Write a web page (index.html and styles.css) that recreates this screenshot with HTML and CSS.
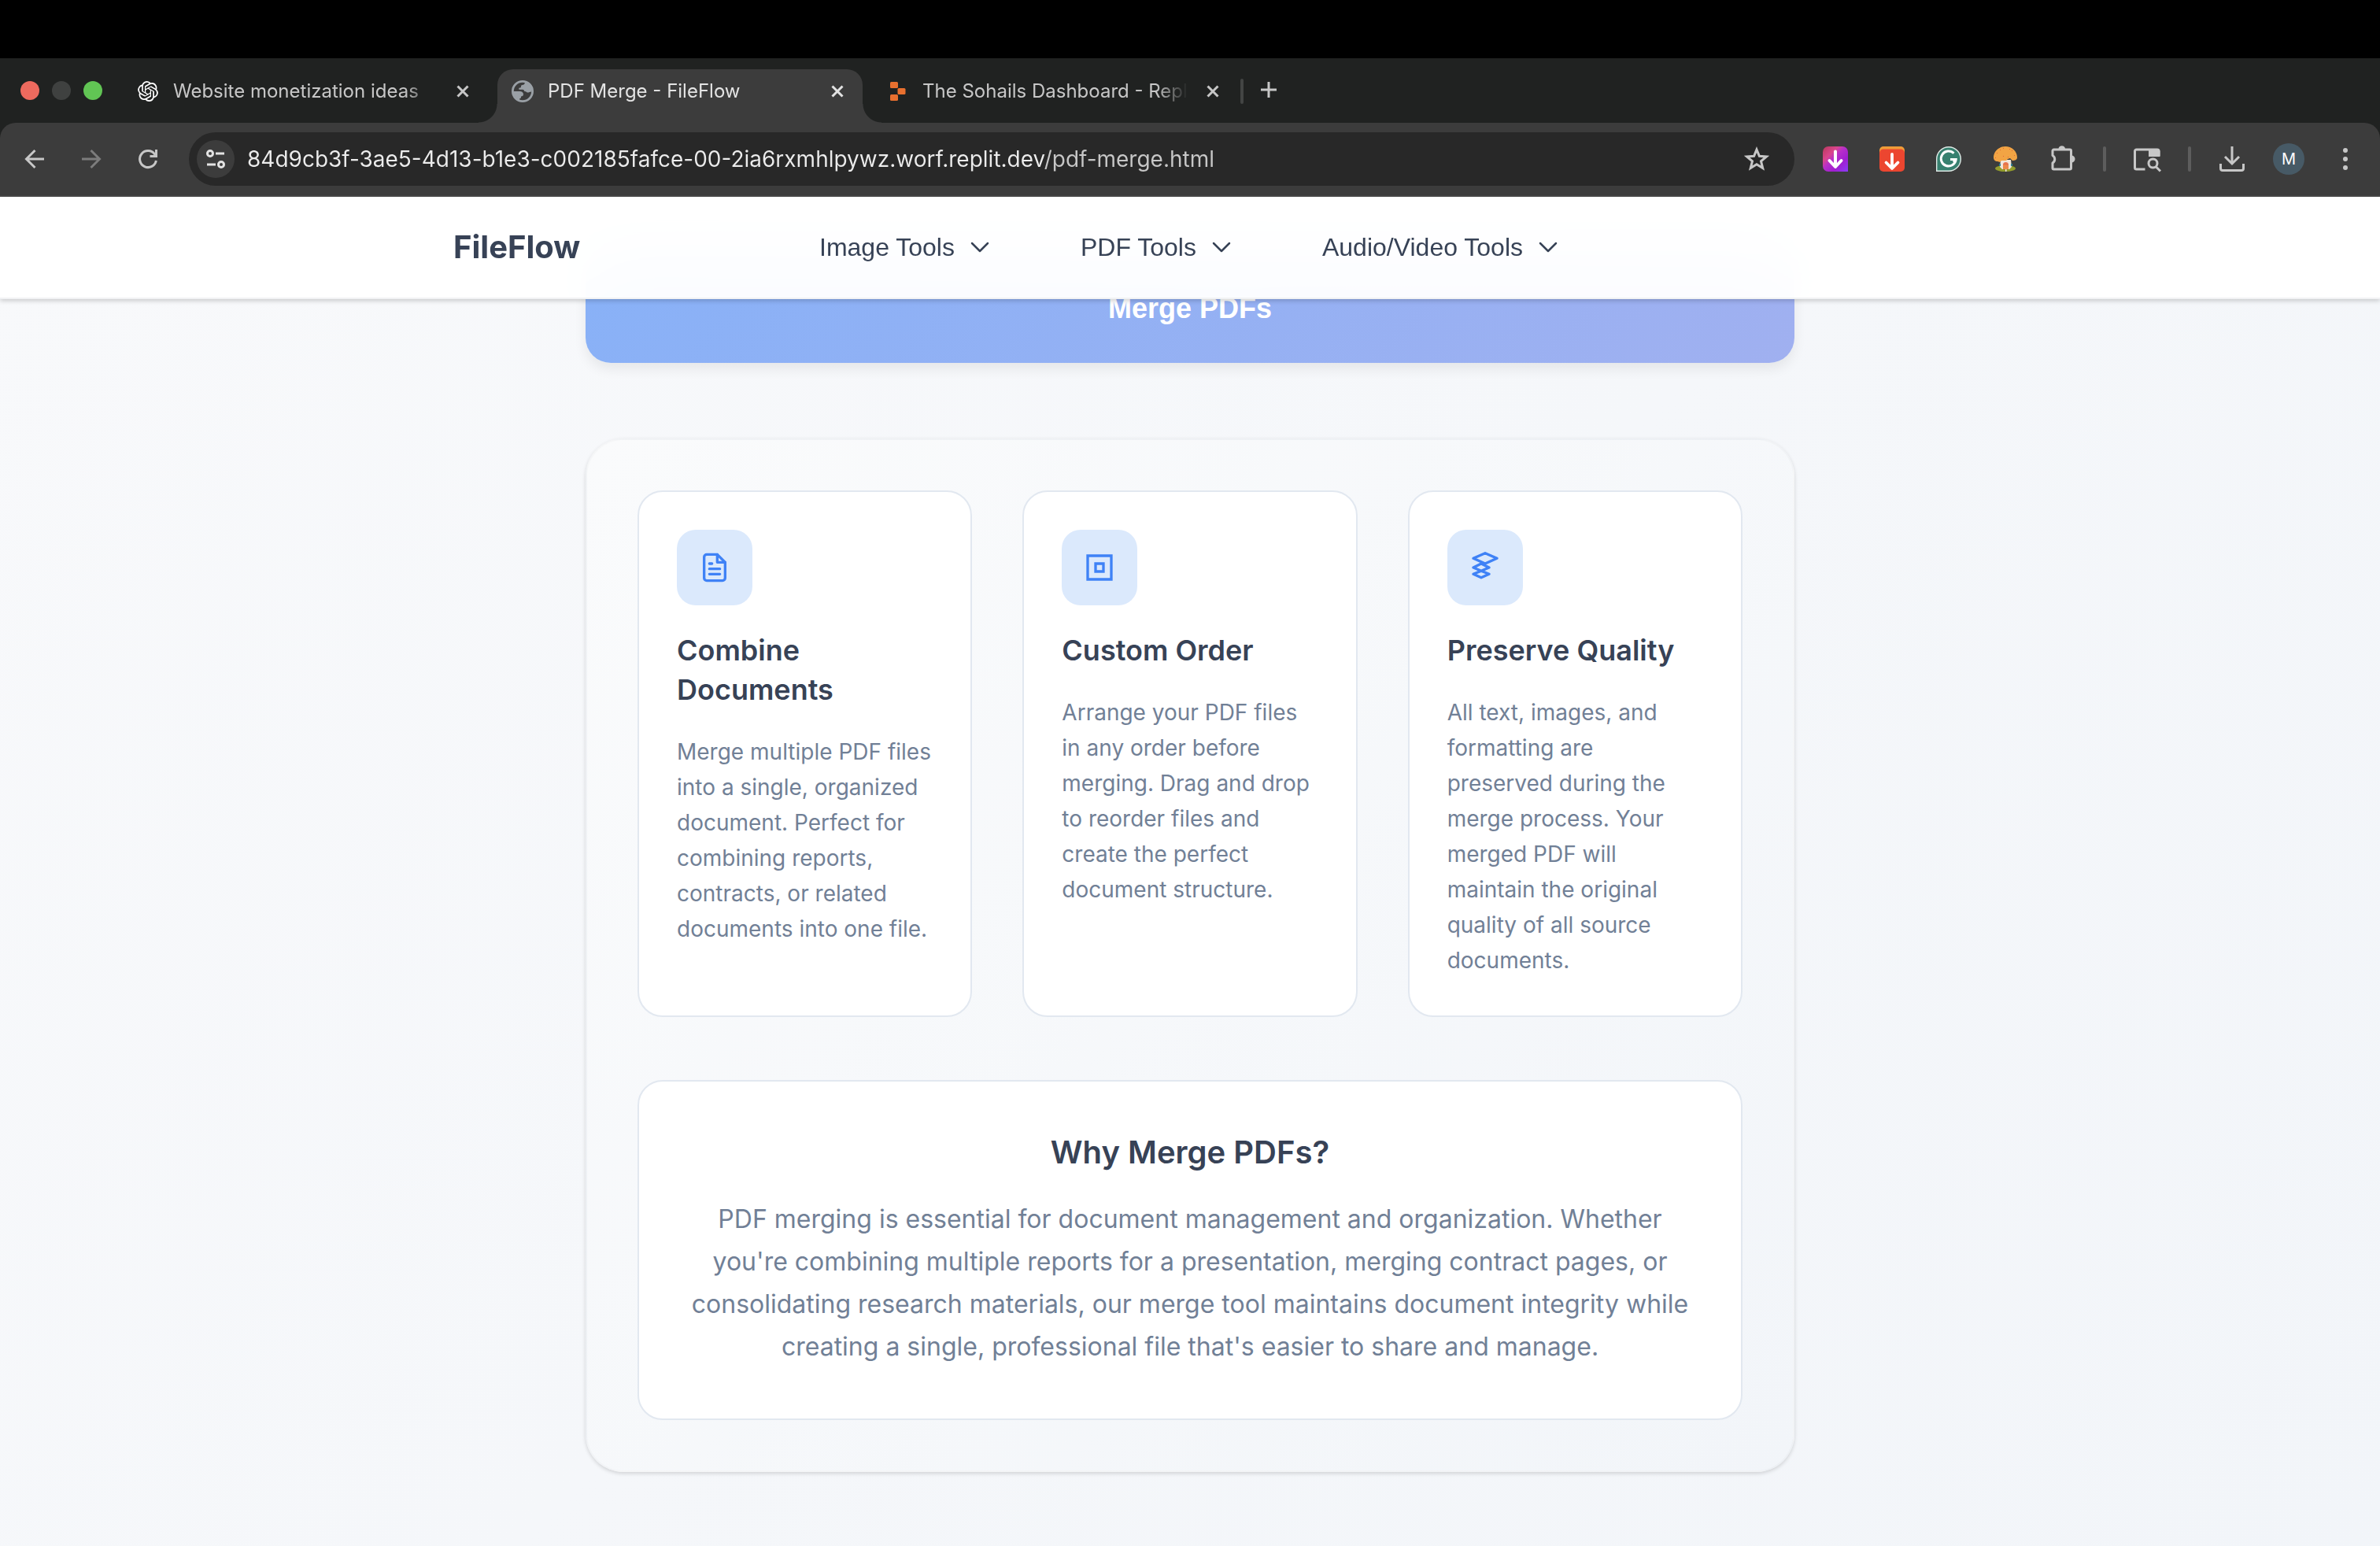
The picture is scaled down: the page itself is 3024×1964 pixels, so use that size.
FILE: index.html
```html
<!DOCTYPE html>
<html lang="en">
<head>
<meta charset="utf-8">
<title>PDF Merge - FileFlow</title>
<link rel="stylesheet" href="styles.css">
</head>
<body>
<div class="menu-strip"></div>

<div class="tab-strip">
  <div class="lights">
    <span class="light light-close"></span>
    <span class="light light-min"></span>
    <span class="light light-max"></span>
  </div>
  <div class="tabs" role="tablist">
    <div class="tab" role="tab">
      <svg class="favicon" viewBox="-1 -1 26 26" fill="#fff"><path d="M22.2819 9.8211a5.9847 5.9847 0 0 0-.5157-4.9108 6.0462 6.0462 0 0 0-6.5098-2.9A6.0651 6.0651 0 0 0 4.9807 4.1818a5.9847 5.9847 0 0 0-3.9977 2.9 6.0462 6.0462 0 0 0 .7427 7.0966 5.98 5.98 0 0 0 .511 4.9107 6.051 6.051 0 0 0 6.5146 2.9001A5.9847 5.9847 0 0 0 13.2599 24a6.0557 6.0557 0 0 0 5.7718-4.2058 5.9894 5.9894 0 0 0 3.9977-2.9001 6.0557 6.0557 0 0 0-.7475-7.0729zm-9.022 12.6081a4.4755 4.4755 0 0 1-2.8764-1.0408l.1419-.0804 4.7783-2.7582a.7948.7948 0 0 0 .3927-.6813v-6.7369l2.02 1.1686a.071.071 0 0 1 .038.052v5.5826a4.504 4.504 0 0 1-4.4945 4.4944zm-9.6607-4.1254a4.4708 4.4708 0 0 1-.5346-3.0137l.142.0852 4.783 2.7582a.7712.7712 0 0 0 .7806 0l5.8428-3.3685v2.3324a.0804.0804 0 0 1-.0332.0615L9.74 19.9502a4.4992 4.4992 0 0 1-6.1408-1.6464zM2.3408 7.8956a4.485 4.485 0 0 1 2.3655-1.9728V11.6a.7664.7664 0 0 0 .3879.6765l5.8144 3.3543-2.0201 1.1685a.0757.0757 0 0 1-.071 0l-4.8303-2.7865A4.504 4.504 0 0 1 2.3408 7.872zm16.5963 3.8558L13.1038 8.364 15.1192 7.2a.0757.0757 0 0 1 .071 0l4.8303 2.7913a4.4944 4.4944 0 0 1-.6765 8.1042v-5.6772a.79.79 0 0 0-.407-.667zm2.0107-3.0231l-.142-.0852-4.7735-2.7818a.7759.7759 0 0 0-.7854 0L9.409 9.2297V6.8974a.0662.0662 0 0 1 .0284-.0615l4.8303-2.7866a4.4992 4.4992 0 0 1 6.6802 4.66zM8.3065 12.863l-2.02-1.1638a.0804.0804 0 0 1-.038-.0567V6.0742a4.4992 4.4992 0 0 1 7.3757-3.4537l-.142.0805L8.704 5.459a.7948.7948 0 0 0-.3927.6813zm1.0976-2.3654l2.602-1.4998 2.6069 1.4998v2.9994l-2.5974 1.4997-2.6067-1.4997Z"/></svg>
      <span class="tab-title">Website monetization ideas</span>
      <button class="tab-close" aria-label="Close tab"><svg viewBox="0 0 16 16"><path d="M1.500 1.500l13 13M14.500 1.500l-13 13"/></svg></button>
    </div>
    <div class="tab tab-active" role="tab" aria-selected="true">
      <svg class="favicon" viewBox="0 0 28 28"><circle cx="14" cy="14" r="12.600" fill="#3c3c3c" stroke="#9aa0a6" stroke-width="2.800"/><path d="M17 2.500C16.800 5 15.500 6 13.500 6c-1 0-1.500.8-1.500 2 0 1-.6 1.500-1.800 1.600C9 9.800 9 11 9.600 11.800H14c1.500 0 2.200 1 2.200 2.200l1.800.2c1 .6 1.200 1.300 2.600 1.300 1.500 0 2.800-1.200 4.900-1.100C26 8 22 3.500 17 2.500z" fill="#9aa0a6"/><path d="M2 14h8.500c2.500 0 4.500 1.500 4.500 3.800 0 1.700-1.200 2.600-3 2.600v1.200c0 1-.7 1.700-1.800 1.700V26C5.500 24 2 19.500 2 14z" fill="#9aa0a6"/></svg>
      <span class="tab-title">PDF Merge - FileFlow</span>
      <button class="tab-close" aria-label="Close tab"><svg viewBox="0 0 16 16"><path d="M1.500 1.500l13 13M14.500 1.500l-13 13"/></svg></button>
    </div>
    <div class="tab" role="tab">
      <svg class="favicon" viewBox="0 0 28 28" fill="#e8702f"><rect x="5" y="2" width="10" height="8" rx="1.500"/><rect x="14.500" y="10" width="10" height="8" rx="1.500"/><rect x="5" y="18" width="10" height="8" rx="1.500"/></svg>
      <span class="tab-title">The Sohails Dashboard - Repl</span>
      <button class="tab-close" aria-label="Close tab"><svg viewBox="0 0 16 16"><path d="M1.500 1.500l13 13M14.500 1.500l-13 13"/></svg></button>
    </div>
  </div>
  <span class="tab-divider"></span>
  <button class="new-tab" aria-label="New tab"><svg viewBox="0 0 20 20"><path d="M10 0v20M0 10h20"/></svg></button>
</div>

<div class="toolbar-back">
<div class="toolbar">
  <button class="tool" aria-label="Back"><svg class="line" viewBox="0 0 32 32"><path d="M28 16H6M16.500 5L5.500 16l11 11"/></svg></button>
  <button class="tool tool-off" aria-label="Forward"><svg class="line" viewBox="0 0 32 32"><path d="M4 16h22M15.500 5l11 11-11 11"/></svg></button>
  <button class="tool" aria-label="Reload"><svg class="line" viewBox="0 0 32 32"><path d="M26.400 18A10.500 10.500 0 1 1 24.500 9.800l1.500 2.200M26.500 4v8.500H18.500"/></svg></button>
  <div class="omnibox">
    <button class="site-info" aria-label="View site information"><svg class="line" viewBox="0 0 28 28"><circle cx="7" cy="7" r="3.500"/><path d="M14 7h11M3 21h11"/><circle cx="21" cy="21" r="3.500"/></svg></button>
    <input class="url" type="text" aria-label="Address" value="84d9cb3f-3ae5-4d13-b1e3-c002185fafce-00-2ia6rxmhlpywz.worf.replit.dev/pdf-merge.html">
    <button class="bookmark" aria-label="Bookmark this tab"><svg class="line" viewBox="0 0 32 32"><path d="M16 4l3.400 8.300 9 .7-6.900 5.800 2.200 8.700L16 22.700l-7.700 4.800 2.200-8.700L3.600 13l9-.7z" stroke-linejoin="miter"/></svg></button>
  </div>
  <div class="tools">
    <button class="tool" aria-label="Video downloader"><svg viewBox="0 0 32 32"><defs><linearGradient id="pink" x1="0" y1="0" x2="1" y2="1"><stop offset="0" stop-color="#b8385c"/><stop offset=".3" stop-color="#d9468c"/><stop offset=".45" stop-color="#b82fc8"/><stop offset=".7" stop-color="#a01fd0"/><stop offset="1" stop-color="#8a3cf8"/></linearGradient></defs><path d="M7 0h18a7 7 0 0 1 7 7v25H7a7 7 0 0 1-7-7V7a7 7 0 0 1 7-7z" fill="url(#pink)"/><path d="M16 6.500V25M8.500 18l7.500 8 7.500-8" fill="none" stroke="#fff" stroke-width="4" stroke-linecap="round" stroke-linejoin="round"/></svg></button>
    <button class="tool" aria-label="Downloader"><svg viewBox="0 0 32 32"><rect width="32" height="20" rx="5" fill="#f09c38"/><rect y="3.500" width="32" height="28.500" rx="5" fill="#ec4630"/><path d="M16 10v17M8.500 20.500l7.500 7.500 7.500-7.500" fill="none" stroke="#fff" stroke-width="3.800" stroke-linecap="round" stroke-linejoin="round"/></svg></button>
    <button class="tool" aria-label="Grammar checker"><svg viewBox="0 0 32 32"><path d="M.7 31.300V16A15.300 15.300 0 1 1 16 31.300z" fill="#37806f" stroke="#dfe9e6" stroke-width="1.400"/><path d="M22.500 8.800A9.500 9.500 0 1 0 25.200 16.500H18M25.300 16.500L22 20" fill="none" stroke="#fff" stroke-width="3"/></svg></button>
    <button class="tool" aria-label="Mushroom extension"><svg viewBox="0 0 32 32"><ellipse cx="16" cy="28" rx="13" ry="4" fill="#939c2c"/><path d="M10 17h13l1 9-3 3h-9l-3-3z" fill="#f1e6da"/><path d="M1 14C1 6 8 0 16 0s15 6 15 14c0 3-3 4-6 4l-3-3-3 1-2 2h-6l-2 2-3-1c-3 0-5-2-5-5z" fill="#f2a444"/><path d="M13 23c0-4 7-4 7 0v6h-7z" fill="#e8744c"/><path d="M13 25h7M13 27.500h7" stroke="#f0a848"/><path d="M8 22h2v3H8zM23 22h2v3h-2z" fill="#2f7f90"/><path d="M5 8h1v1H5zM9 4h1v1H9zM24 5h1v1h-1zM13 2h1v1h-1zM3 14h1v1H3zM19 13h1v1h-1zM27 11h1v1h-1zM13 12h1v1h-1zM21 3h1v1h-1z" fill="#e0643a"/><path d="M16 29h1.500v3H16z" fill="#f1e6da"/></svg></button>
    <button class="tool" aria-label="Extensions"><svg viewBox="0 0 32 32"><path d="M5.500 4H26a1.500 1.500 0 0 1 1.500 1.500v22A1.500 1.500 0 0 1 26 29H5.500A1.500 1.500 0 0 1 4 27.500V21a5.500 5.500 0 0 0 0-9.500v-6A1.500 1.500 0 0 1 5.500 4z" fill="none" stroke="#c7c7c7" stroke-width="3" stroke-linejoin="round"/><path d="M11.500 3a4.300 4.300 0 0 1 8.500 0zM28 11.500a4.500 4.500 0 0 1 0 9z" fill="#c7c7c7"/></svg></button>
    <span class="tool-divider"></span>
    <button class="tool" aria-label="Search side panel"><svg class="wide" viewBox="0 0 36 32"><path d="M15.500 29H4.500A2 2 0 0 1 2.500 27V6a2 2 0 0 1 2-2H31a2 2 0 0 1 2 2v6" fill="none" stroke="#c7c7c7" stroke-width="3"/><path d="M20 3h12a3 3 0 0 1 2.500 3v7H20z" fill="#c7c7c7"/><circle cx="25.500" cy="21.500" r="5.500" fill="none" stroke="#c7c7c7" stroke-width="3"/><path d="M29 25.500l6 6" stroke="#c7c7c7" stroke-width="3"/></svg></button>
    <span class="tool-divider"></span>
    <button class="tool" aria-label="Downloads"><svg class="line" viewBox="0 0 32 32"><path d="M16 0v21M7 13l9 9 9-9M1.500 22v6a2.500 2.500 0 0 0 2.500 2.500h24a2.500 2.500 0 0 0 2.500-2.500v-6"/></svg></button>
    <button class="tool" aria-label="Profile"><span class="avatar">M</span></button>
    <button class="tool" aria-label="Menu"><svg viewBox="0 0 32 32" fill="#c7c7c7"><circle cx="16" cy="5" r="3"/><circle cx="16" cy="16" r="3"/><circle cx="16" cy="27" r="3"/></svg></button>
  </div>
</div>
</div>

<div class="page">
  <header class="site-header">
    <div class="header-inner">
      <a class="logo" href="#">FileFlow</a>
      <nav class="nav">
        <button class="nav-item">Image Tools<svg viewBox="0 0 24 24"><path d="M6 9l6 6 6-6"/></svg></button>
        <button class="nav-item">PDF Tools<svg viewBox="0 0 24 24"><path d="M6 9l6 6 6-6"/></svg></button>
        <button class="nav-item">Audio/Video Tools<svg viewBox="0 0 24 24"><path d="M6 9l6 6 6-6"/></svg></button>
      </nav>
    </div>
  </header>
  <main class="main">
    <button class="merge">Merge PDFs</button>
    <section class="panel">
      <div class="cards">
        <article class="card">
          <div class="card-icon"><svg viewBox="0 0 24 24"><path d="M14 2H6a2 2 0 0 0-2 2v16a2 2 0 0 0 2 2h12a2 2 0 0 0 2-2V8z"/><path d="M14 2v6h6M16 13H8M16 17H8M10 9H8"/></svg></div>
          <h3>Combine Documents</h3>
          <p>Merge multiple PDF files into a single, organized document. Perfect for combining reports, contracts, or related documents into one file.</p>
        </article>
        <article class="card">
          <div class="card-icon"><svg viewBox="0 0 24 24" class="square"><path d="M3 3h18v18H3zM9 9h6v6H9z"/></svg></div>
          <h3>Custom Order</h3>
          <p>Arrange your PDF files in any order before merging. Drag and drop to reorder files and create the perfect document structure.</p>
        </article>
        <article class="card">
          <div class="card-icon"><svg viewBox="0 0 24 24"><path d="M12 1l9 4-9 4-9-4zM9 9l6 3-6 2.500L3 12zM9 14.500l6 2.500-6 2.700L3 17z"/></svg></div>
          <h3>Preserve Quality</h3>
          <p>All text, images, and formatting are preserved during the merge process. Your merged PDF will maintain the original quality of all source documents.</p>
        </article>
      </div>
      <div class="why">
        <h2>Why Merge PDFs?</h2>
        <p>PDF merging is essential for document management and organization. Whether you're combining multiple reports for a presentation, merging contract pages, or consolidating research materials, our merge tool maintains document integrity while creating a single, professional file that's easier to share and manage.</p>
      </div>
    </section>
  </main>
</div>
</body>
</html>
```
FILE: styles.css
```css
* {
  box-sizing: border-box;
}

body {
  margin: 0;
  min-height: 100vh;
  display: flex;
  flex-direction: column;
  background: #f5f7fa;
  font-family: Inter, "Liberation Sans", sans-serif;
}

button {
  padding: 0;
  border: 0;
  background: none;
  color: inherit;
  font: inherit;
}

svg {
  display: block;
  flex: none;
}

h2,
h3,
p {
  margin: 0;
}

/* Browser window */

.menu-strip {
  height: 74px;
  background: #000;
}

.tab-strip {
  display: flex;
  height: 82px;
  padding-left: 26px;
  background: #202221;
}

.lights {
  display: flex;
  align-items: center;
  gap: 16px;
  width: 130px;
}

.light {
  width: 24px;
  height: 24px;
  border-radius: 50%;
}

.light-close {
  background: #ed6a5e;
}

.light-min {
  background: #3f4140;
}

.light-max {
  background: #61c554;
}

.tabs {
  display: flex;
  align-items: flex-end;
  gap: 12px;
}

.tab {
  display: flex;
  align-items: center;
  gap: 18px;
  width: 464px;
  height: 68px;
  padding: 0 16px 12px 18px;
  color: #c7c7c7;
  font-size: 24px;
  line-height: 32px;
}

.tab-active {
  position: relative;
  border-radius: 20px 20px 0 0;
  background: #3c3c3c;
  color: #e3e3e3;
}

/* Flared feet that join the active tab to the toolbar */
.tab-active::before,
.tab-active::after {
  content: "";
  position: absolute;
  bottom: 0;
  width: 24px;
  height: 24px;
}

.tab-active::before {
  right: 100%;
  background: radial-gradient(circle at 0 0, transparent 23px, #3c3c3c 24px);
}

.tab-active::after {
  left: 100%;
  background: radial-gradient(circle at 100% 0, transparent 23px, #3c3c3c 24px);
}

.favicon {
  width: 28px;
  height: 28px;
}

.tab-title {
  flex: 1;
  white-space: nowrap;
  mask-image: linear-gradient(to left, transparent, #000 40px);
}

.tab-close {
  display: grid;
  place-items: center;
  width: 32px;
  height: 32px;
}

.tab-close svg {
  width: 16px;
  height: 16px;
  fill: none;
  stroke: currentColor;
  stroke-width: 3;
}

.tab-divider {
  width: 4px;
  height: 32px;
  margin: 26px 8px 0 4px;
  border-radius: 2px;
  background: #434544;
}

.new-tab {
  display: grid;
  place-items: center;
  width: 48px;
  height: 80px;
  color: #c7c7c7;
}

.new-tab svg {
  width: 20px;
  height: 20px;
  stroke: currentColor;
  stroke-width: 3;
}

.toolbar-back {
  background: #202221;
}

.toolbar {
  display: flex;
  align-items: center;
  padding: 12px 8px;
  border-bottom: 2px solid #474747;
  border-radius: 20px 20px 0 0;
  background: #3c3c3c;
  color: #c7c7c7;
}

.tool {
  display: grid;
  place-items: center;
  width: 72px;
  height: 68px;
}

.tool svg,
.bookmark svg {
  width: 32px;
  height: 32px;
  overflow: visible;
}

.tool .wide {
  width: 36px;
}

.tool-off {
  color: #7c7c7c;
}

.line {
  fill: none;
  stroke: currentColor;
  stroke-width: 3;
}

.omnibox {
  display: flex;
  flex: 1;
  align-items: center;
  height: 68px;
  margin: 0 16px;
  padding: 0 24px 0 10px;
  border-radius: 34px;
  background: #282828;
}

.site-info {
  display: grid;
  place-items: center;
  width: 48px;
  height: 48px;
  border-radius: 50%;
  background: #3c3c3c;
  color: #e3e3e3;
}

.site-info svg {
  width: 28px;
  height: 28px;
}

/* The host is brighter than the path that follows it */
.url {
  flex: 1;
  height: 40px;
  margin: 0 16px;
  padding: 0;
  border: 0;
  background: linear-gradient(to right, #ececec 1012px, #c7c7c7 1012px);
  background-clip: text;
  color: transparent;
  font: 28px/40px Inter, sans-serif;
}

.bookmark {
  padding: 8px;
}

.tools {
  display: flex;
  align-items: center;
}

.tool-divider {
  width: 4px;
  height: 32px;
  margin: 0 16px;
  border-radius: 2px;
  background: #5d5d5d;
}

.avatar {
  width: 40px;
  border-radius: 50%;
  background: #475a66;
  color: #fff;
  font-size: 20px;
  line-height: 40px;
  text-align: center;
}

/* FileFlow page */

.page {
  flex: 1;
  background: linear-gradient(135deg, #f8f9fb, #f2f5f9);
  color: #374256;
}

.site-header {
  position: relative;
  z-index: 1;
  padding: 0 64px;
  border-bottom: 2px solid #f1f2f4;
  background: rgba(255, 255, 255, 0.96);
  box-shadow: 0 2px 6px rgba(0, 0, 0, 0.2);
  backdrop-filter: blur(40px);
}

.header-inner {
  display: grid;
  grid-template-columns: 1fr auto 1fr;
  align-items: center;
  max-width: 1872px;
  min-height: 128px;
  margin: 0 auto;
}

.logo {
  color: inherit;
  font-size: 40px;
  font-weight: 700;
  line-height: 56px;
  text-decoration: none;
}

.nav {
  display: flex;
  gap: 108px;
  padding-left: 4px;
}

.nav-item {
  display: flex;
  align-items: center;
  gap: 12px;
  font: 32px/40px "Liberation Sans", Arial, sans-serif;
}

.nav-item svg {
  width: 40px;
  height: 40px;
  fill: none;
  stroke: currentColor;
  stroke-width: 1.5;
  stroke-linecap: round;
  stroke-linejoin: round;
}

/* The page is scrolled, so the button is partly under the header */
.main {
  width: 1536px;
  max-width: 100%;
  margin: -57px auto 0;
  padding-bottom: 92px;
}

.merge {
  display: block;
  width: 100%;
  padding: 48px;
  border-radius: 32px;
  background: linear-gradient(135deg, #88b1f7, #a0b0f0);
  box-shadow: 0 8px 16px rgba(0, 0, 0, 0.07);
  color: #fff;
  font: 700 36px/42px "Liberation Sans", Arial, sans-serif;
}

.panel {
  margin-top: 96px;
  padding: 64px;
  border: 2px solid rgba(0, 0, 0, 0.02);
  border-radius: 48px;
  background: linear-gradient(135deg, #fafbfc, #f2f5f9);
  box-shadow: 0 2px 5px rgba(0, 0, 0, 0.15);
}

.cards {
  display: grid;
  grid-template-columns: repeat(3, 1fr);
  gap: 64px;
}

.card,
.why {
  border: 2px solid #e2e8f0;
  border-radius: 32px;
  background: #fff;
}

.card {
  padding: 48px 48px 47px;
}

.card-icon {
  display: grid;
  place-items: center;
  width: 96px;
  height: 96px;
  margin-bottom: 32px;
  border-radius: 24px;
  background: #dbe9fc;
}

.card-icon svg {
  width: 40px;
  height: 40px;
  fill: none;
  stroke: #3f82f6;
  stroke-width: 2;
  stroke-linecap: round;
  stroke-linejoin: round;
}

.card-icon .square {
  stroke-linejoin: miter;
}

.card h3 {
  margin-bottom: 32px;
  font-size: 36px;
  font-weight: 600;
  line-height: 50px;
}

.card p {
  color: #718096;
  font-size: 28px;
  line-height: 45px;
}

.why {
  margin-top: 80px;
  padding: 64px;
  text-align: center;
}

.why h2 {
  margin-bottom: 32px;
  font-size: 40px;
  font-weight: 600;
  line-height: 52px;
}

.why p {
  color: #718096;
  font-size: 32px;
  line-height: 54px;
}
```
